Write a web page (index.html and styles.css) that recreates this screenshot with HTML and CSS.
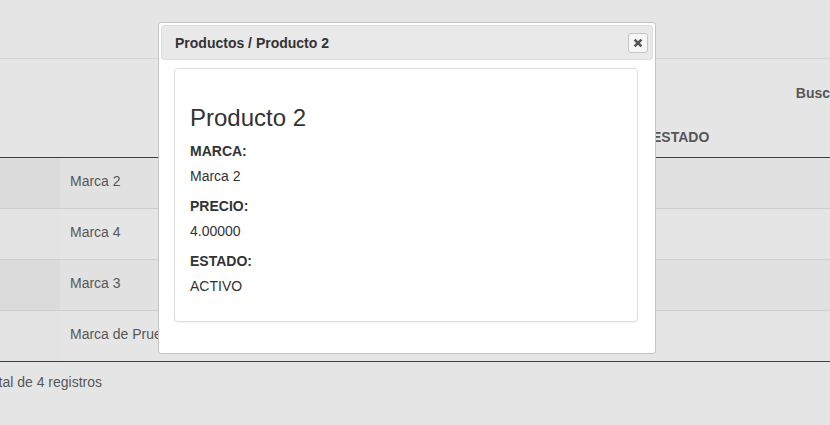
FILE: index.html
```html
<!DOCTYPE html>
<html lang="es">
<head>
<meta charset="utf-8">
<title>Productos</title>
<link rel="stylesheet" href="styles.css">
</head>
<body>
<div class="page">
  <div class="navbar"></div>
  <div class="wrapper">
    <div class="toolbar">
      <label class="filter-label">Buscar:</label>
      <span class="filter-input"></span>
    </div>
    <table class="data">
      <thead>
        <tr>
          <th class="c1"></th>
          <th class="c2"></th>
          <th class="c3"></th>
          <th class="c4"></th>
          <th class="c5">ESTADO</th>
          <th class="c6"></th>
        </tr>
      </thead>
      <tbody>
        <tr class="odd"><td class="sorting"></td><td>Marca 2</td><td></td><td></td><td></td><td></td></tr>
        <tr class="even"><td class="sorting"></td><td>Marca 4</td><td></td><td></td><td></td><td></td></tr>
        <tr class="odd"><td class="sorting"></td><td>Marca 3</td><td></td><td></td><td></td><td></td></tr>
        <tr class="even"><td class="sorting"></td><td>Marca de Prueba</td><td></td><td></td><td></td><td></td></tr>
      </tbody>
    </table>
    <div class="info"><span>Mostrando registros del 1 al 4 de un total de 4 registros</span></div>
  </div>
</div>

<div class="overlay"></div>

<div class="dialog">
  <div class="titlebar">
    <span class="title">Productos / Producto 2</span>
    <button class="close" type="button" aria-label="Cerrar">
      <svg width="10" height="10" viewBox="0 0 10 10"><path d="M1.6 1.6 L8.4 8.4 M8.4 1.6 L1.6 8.4" stroke="#555" stroke-width="2.6" fill="none"/></svg>
    </button>
  </div>
  <div class="dialog-content">
    <div class="panel">
      <div class="panel-body">
        <h3>Producto 2</h3>
        <label>MARCA:</label>
        <p>Marca 2</p>
        <label>PRECIO:</label>
        <p>4.00000</p>
        <label>ESTADO:</label>
        <p>ACTIVO</p>
      </div>
    </div>
  </div>
</div>
</body>
</html>
```

FILE: styles.css
```css
html, body {
  margin: 0;
  padding: 0;
  background: #fff;
  overflow: hidden;
  width: 830px;
  height: 425px;
}
body {
  font-family: "Liberation Sans", Arial, Helvetica, sans-serif;
  font-size: 14px;
  line-height: 20px;
  color: #333;
}
.page {
  width: 1104px;
  margin-left: -100px;
}
.navbar {
  height: 58px;
  border-bottom: 1px solid #e7e7e7;
  background: #fff;
}
.toolbar {
  display: flex;
  justify-content: flex-end;
  align-items: center;
  padding: 24px 0 14px;
  height: 20px;
}
.filter-label {
  font-weight: bold;
}
.filter-input {
  display: inline-block;
  width: 150px;
  height: 20px;
  margin-left: 6px;
}
table.data {
  width: 100%;
  border-collapse: separate;
  border-spacing: 0;
  table-layout: fixed;
  border-bottom: 1px solid #111;
}
.data th {
  box-sizing: border-box;
  text-align: left;
  font-weight: bold;
  padding: 10px 18px 10px;
  border-bottom: 1px solid #111;
  line-height: 20px;
}
.c1 { width: 160px; }
.c2 { width: 191px; }
.c3 { width: 203px; }
.c4 { width: 180px; }
.c5 { width: 166px; }
.data td {
  padding: 13px 10px 17px;
  height: 20px;
  line-height: 20px;
  white-space: nowrap;
  overflow: hidden;
}
.data tbody tr + tr td {
  border-top: 1px solid #ddd;
}
.data tr.odd td { background: #f9f9f9; }
.data tr.odd td.sorting { background: #f1f1f1; }
.data tr.even td { background: #fff; }
.data tr.even td.sorting { background: #fcfcfc; }
.info {
  display: flex;
  justify-content: flex-end;
  width: 202px;
  padding-top: 10px;
}
.info span {
  white-space: nowrap;
  flex: none;
}
.overlay {
  position: fixed;
  inset: 0;
  background: #aaa;
  opacity: 0.3;
}
.dialog {
  position: absolute;
  left: 158px;
  top: 22px;
  width: 498px;
  box-sizing: border-box;
  padding: 2px;
  background: #fff;
  border: 1px solid #c5c5c5;
  border-radius: 3px;
}
.titlebar {
  height: 35px;
  box-sizing: border-box;
  display: flex;
  align-items: center;
  justify-content: space-between;
  padding: 0 4px 0 13px;
  background: #e9e9e9;
  border: 1px solid #ddd;
  border-radius: 3px;
}
.title {
  font-weight: bold;
  color: #333;
  font-size: 14px;
}
.close {
  width: 20px;
  height: 20px;
  padding: 0;
  margin: 0;
  display: flex;
  align-items: center;
  justify-content: center;
  background: #f6f6f6;
  border: 1px solid #c5c5c5;
  border-radius: 3px;
}
.dialog-content {
  padding: 8px 15px 9px 13px;
}
.panel {
  background: #fff;
  border: 1px solid #ddd;
  border-radius: 4px;
  box-shadow: 0 1px 1px rgba(0,0,0,0.05);
  margin-bottom: 20px;
}
.panel-body {
  padding: 15px;
}
.panel-body h3 {
  font-size: 24px;
  font-weight: 500;
  line-height: 1.1;
  margin: 21px 0 10px;
  color: #333;
}
.panel-body label {
  display: block;
  font-weight: bold;
  margin-bottom: 5px;
}
.panel-body p {
  margin: 0 0 10px;
}
```
